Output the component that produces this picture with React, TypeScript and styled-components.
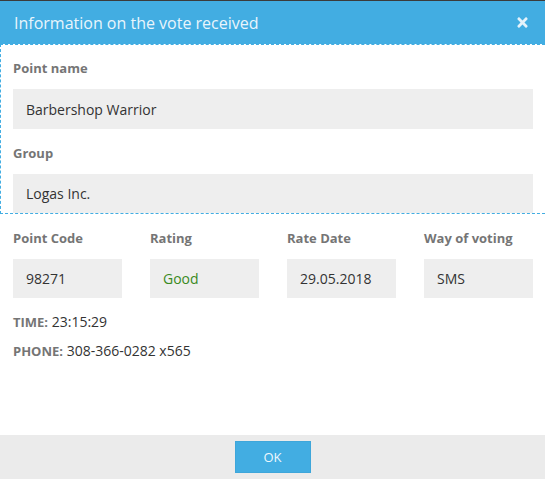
import React from "react";
import styled, { createGlobalStyle } from "styled-components";
import { FaTimes } from "react-icons/fa";

const GlobalStyle = createGlobalStyle`
  body {
    margin: 0;
    background: #fff;
    font-family: "Open Sans", "Liberation Sans", sans-serif;
  }
`;

const Modal = styled.div`
  width: 545px;
  height: 479px;
  display: flex;
  flex-direction: column;
  background: #fff;
  border-top: 1px solid #3b3b3b;
  box-sizing: border-box;
  overflow: hidden;
`;

const Header = styled.div`
  height: 43px;
  flex: none;
  display: flex;
  align-items: center;
  justify-content: space-between;
  padding: 0 15px 0 14px;
  background: #42ade2;
  color: #e9f5fc;
`;

const Title = styled.h2`
  margin: 0;
  font-size: 16px;
  font-weight: 400;
`;

const Close = styled.button`
  border: none;
  background: none;
  padding: 0;
  display: flex;
  color: #e4f2fb;
  font-size: 15px;
  cursor: pointer;
`;

const FocusBox = styled.div`
  border: 1px dashed #42ade2;
  border-right: none;
  padding: 14px 12px 0 12px;
`;

const Body = styled.div`
  flex: 1;
  padding: 0 13px;
`;

const Label = styled.div<{ $top?: number }>`
  margin-top: ${(p) => p.$top ?? 0}px;
  height: 18px;
  line-height: 18px;
  font-size: 13px;
  font-weight: 700;
  color: #757575;
`;

const Field = styled.div<{ $h?: number; $green?: boolean }>`
  margin-top: 12px;
  height: ${(p) => p.$h ?? 40}px;
  display: flex;
  align-items: center;
  padding: 0 13px;
  background: #eeeeee;
  font-size: 14px;
  color: ${(p) => (p.$green ? "#3a8a22" : "#333")};
`;

const Grid = styled.div`
  display: grid;
  grid-template-columns: repeat(4, 109px);
  column-gap: 28px;
  margin-top: 15px;
`;

const Line = styled.div<{ $top: number }>`
  margin-top: ${(p) => p.$top}px;
  font-size: 14px;
  color: #333;
  line-height: 18px;
`;

const Key = styled.b`
  font-size: 13px;
  color: #757575;
`;

const Footer = styled.div`
  height: 44px;
  flex: none;
  display: flex;
  align-items: center;
  justify-content: center;
  background: #ebebeb;
`;

const OkButton = styled.button`
  width: 76px;
  height: 32px;
  border: 1px solid #3ea6da;
  background: #42ade2;
  color: #eef7fd;
  font-family: "Open Sans", "Liberation Sans", sans-serif;
  font-size: 13px;
  cursor: pointer;
`;

const cells = [
  { label: "Point Code", value: "98271" },
  { label: "Rating", value: "Good", green: true },
  { label: "Rate Date", value: "29.05.2018" },
  { label: "Way of voting", value: "SMS" },
];

export default function App() {
  return (
    <>
      <GlobalStyle />
      <Modal>
        <Header>
          <Title>Information on the vote received</Title>
          <Close aria-label="close">
            <FaTimes />
          </Close>
        </Header>
        <FocusBox>
          <Label>Point name</Label>
          <Field>Barbershop Warrior</Field>
          <Label $top={15}>Group</Label>
          <Field $h={39}>Logas Inc.</Field>
        </FocusBox>
        <Body>
          <Grid>
            {cells.map((c) => (
              <div key={c.label}>
                <Label>{c.label}</Label>
                <Field $h={39} $green={c.green}>
                  {c.value}
                </Field>
              </div>
            ))}
          </Grid>
          <Line $top={15}>
            <Key>TIME:</Key> 23:15:29
          </Line>
          <Line $top={11}>
            <Key>PHONE:</Key> 308-366-0282 x565
          </Line>
        </Body>
        <Footer>
          <OkButton>OK</OkButton>
        </Footer>
      </Modal>
    </>
  );
}
